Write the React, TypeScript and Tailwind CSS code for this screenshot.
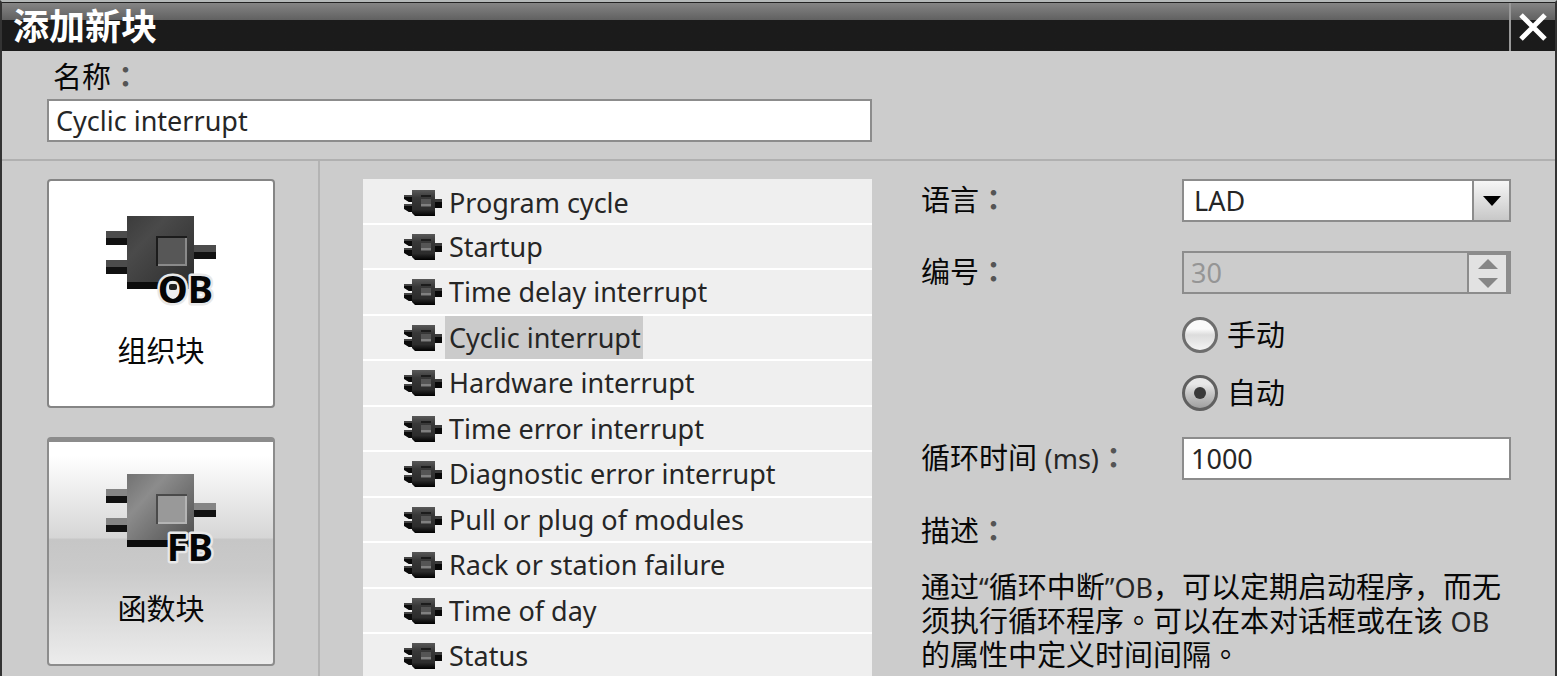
import { useState, type ReactNode } from "react";

const blocks = [
  "Program cycle",
  "Startup",
  "Time delay interrupt",
  "Cyclic interrupt",
  "Hardware interrupt",
  "Time error interrupt",
  "Diagnostic error interrupt",
  "Pull or plug of modules",
  "Rack or station failure",
  "Time of day",
  "Status",
];

/* Full-width punctuation that sits in the middle of its cell */
function Mid({ children }: { children: ReactNode }) {
  return (
    <span lang="zh-TW" className="font-['Noto_Sans_CJK_TC',sans-serif] leading-none">
      {children}
    </span>
  );
}

function Colon() {
  return (
    <span lang="zh-TW" className="font-['Noto_Sans_CJK_TC',sans-serif] leading-none font-bold text-[#555]">
      ：
    </span>
  );
}

function Latin({ children }: { children: ReactNode }) {
  return <span className="text-[27px] leading-none text-[#262626]">{children}</span>;
}

function BlockIcon({ label, dark }: { label: string; dark?: boolean }) {
  const id = "chip" + label;
  const top = dark ? "#4a4a4a" : "#8c8c8c";
  const low = dark ? "#2c2c2c" : "#4c4c4c";
  const pinTop = dark ? "#4c4c4c" : "#858585";
  return (
    <svg className="h-[100px] w-[112px]" viewBox="0 0 112 100" aria-hidden="true">
      <defs>
        <linearGradient id={id} x1="0" y1="0" x2="1" y2="1">
          <stop offset="0" stopColor={dark ? "#3c3c3c" : "#727272"} />
          <stop offset="0.3" stopColor={top} />
          <stop offset="1" stopColor={low} />
        </linearGradient>
      </defs>
      {[
        [1, 17, 22],
        [1, 46, 22],
        [88, 31, 23],
      ].map(([x, y, w]) => (
        <g key={`${x}-${y}`}>
          <rect x={x} y={y} width={w} height="14" fill={pinTop} />
          <rect x={x} y={y + 7} width={w} height="7" fill="#111" />
        </g>
      ))}
      <rect x="22" y="2" width="67" height="73" fill={`url(#${id})`} />
      <rect x="22" y="68" width="67" height="7" fill="#0c0c0c" />
      <rect x="51" y="22" width="31" height="30" fill={dark ? "#1c1c1c" : "#4a4a4a"} />
      <rect x="53" y="24" width="29" height="28" fill={dark ? "#8a8a8a" : "#b4b4b4"} />
      <rect x="53" y="24" width="27" height="26" fill={dark ? "#575757" : "#999"} />
      <text
        x="108"
        y="89"
        textAnchor="end"
        fontFamily="Noto Sans, sans-serif"
        fontWeight="700"
        fontSize="38"
        fill="#050505"
        stroke="#e8e8e8"
        strokeWidth="5"
        strokeLinejoin="round"
        paintOrder="stroke"
      >
        {label}
      </text>
      {dark && <ellipse cx="68" cy="76" rx="6" ry="9" fill="#eee" />}
      {dark && <rect x="64" y="70" width="8" height="6" rx="2" fill="#222" />}
    </svg>
  );
}

function ChipIcon() {
  return (
    <svg className="h-[28px] w-[40px] shrink-0" viewBox="0 0 40 28" aria-hidden="true">
      <defs>
        <linearGradient id="smallchip" x1="0" y1="0" x2="0" y2="1">
          <stop offset="0" stopColor="#595959" />
          <stop offset="0.3" stopColor="#383838" />
          <stop offset="0.75" stopColor="#2c2c2c" />
          <stop offset="1" stopColor="#000" />
        </linearGradient>
      </defs>
      <path d="M1 6h8v7H6L1 9z" fill="#444" />
      <path d="M1 8h8v5H6L1 10z" fill="#0a0a0a" />
      <path d="M1 15h8v8H6L1 19z" fill="#444" />
      <path d="M1 17h8v6H6L1 20z" fill="#0a0a0a" />
      <rect x="31" y="10" width="8" height="9" fill="#3a3a3a" />
      <rect x="31" y="13" width="8" height="6" fill="#080808" />
      <path d="M9 1h23v26H12l-3-3z" fill="url(#smallchip)" />
      <path d="M18 6h10v2H18z" fill="#1c1c1c" />
      <rect x="18" y="10" width="10" height="8" fill="#555" />
      <rect x="18" y="15" width="10" height="2" fill="#808080" />
    </svg>
  );
}

const field =
  "h-[43px] w-full rounded-none border-2 border-[#8c8c8c] bg-white text-[27px] text-[#262626] outline-none";

function Radio({ id, text, checked, onChange }: { id: string; text: string; checked: boolean; onChange: () => void }) {
  return (
    <div className="flex h-9 items-center gap-[9px]">
      <span className="relative h-9 w-9">
        <input
          id={id}
          type="radio"
          name="numbering"
          checked={checked}
          onChange={onChange}
          className="block h-9 w-9 appearance-none rounded-full border-[3px] border-[#6e6e6e] bg-linear-to-b from-[#fafafa] from-30% via-[#dcdcdc] via-50% to-[#f4f4f4] checked:border-[#606060] checked:from-[#e8e8e8] checked:from-20% checked:via-[#c8c8c8] checked:to-[#a0a0a0]"
        />
        {checked && (
          <span className="pointer-events-none absolute inset-3 rounded-full bg-[#3a3a3a]" />
        )}
      </span>
      <label htmlFor={id}>{text}</label>
    </div>
  );
}

export default function App() {
  const [name, setName] = useState("Cyclic interrupt");
  const [selected, setSelected] = useState("Cyclic interrupt");
  const [auto, setAuto] = useState(true);
  const [cycle, setCycle] = useState("1000");

  return (
    <div
      lang="zh-CN"
      className="flex min-h-screen flex-col border-x-2 border-t-2 border-x-[#333] border-t-[#b4b8b8] bg-[#ccc] font-['Noto_Sans','Noto_Sans_CJK_SC',sans-serif] text-[29px] leading-[34px] text-[#080808]"
    >
      <header className="flex h-[49px] items-stretch border-t border-[#222] bg-linear-to-b from-[#858585] from-0% via-[#606060] via-36% to-[#1b1b1b] to-36%">
        <h1 className="flex flex-1 items-center pl-[11px] text-[36px] leading-[46px] font-bold text-white">添加新块</h1>
        <button type="button" aria-label="关闭" className="flex w-[46px] items-center justify-center border-l-2 border-[#999]">
          <svg className="h-8 w-8" viewBox="0 0 32 32" fill="none" stroke="#fff" strokeWidth="5" aria-hidden="true">
            <path d="M4 4l24 24M28 4L4 28" />
          </svg>
        </button>
      </header>

      <section className="flex h-[110px] shrink-0 flex-col border-b-2 border-[#b0b0b0] pt-[9px] pr-[683px] pl-[45px]">
        <label htmlFor="name" className="mb-[5px] h-[34px] pl-[6px]">
          名称<Colon />
        </label>
        <input id="name" value={name} onChange={(e) => setName(e.target.value)} className={`${field} px-[7px]`} />
      </section>

      <main className="flex flex-1">
        <nav className="flex w-[318px] shrink-0 flex-col gap-[29px] border-r-2 border-[#b4b4b4] pt-[18px] pl-[45px]">
          <button
            type="button"
            className="flex h-[229px] w-[228px] flex-col items-center rounded-sm border-2 border-[#858585] bg-white pt-[33px]"
          >
            <BlockIcon label="OB" dark />
            <span className="mt-[20px]">组织块</span>
          </button>
          <button
            type="button"
            className="flex h-[229px] w-[228px] flex-col items-center rounded-sm border-2 border-t-[5px] border-[#8c8c8c] bg-[linear-gradient(#fff_6%,#d6d6d6_43%,#c6c6c6_44%,#cacaca_58%,#ececec)] pt-[30px]"
          >
            <BlockIcon label="FB" />
            <span className="mt-[20px]">函数块</span>
          </button>
        </nav>

        <ul className="mt-[18px] ml-[43px] flex-1 bg-[#efefef] text-[27px] text-[#262626]">
          {blocks.map((block) => (
            <li
              key={block}
              className="overflow-hidden border-b-2 border-white first:h-[47px] first:pt-[2px] last:h-[41px] last:border-b-0 even:h-[45px] odd:h-[46px]"
            >
              <button
                type="button"
                onClick={() => setSelected(block)}
                className="flex h-[44px] w-full items-center gap-[2px] pl-[40px] whitespace-nowrap"
              >
                <ChipIcon />
                <span
                  className={
                    selected === block
                      ? "flex h-[44px] items-center bg-[#cbcbcb] pr-[2px] pl-[4px]"
                      : "flex h-[44px] items-center pr-[2px] pl-[4px]"
                  }
                >
                  {block}
                </span>
              </button>
            </li>
          ))}
        </ul>

        <form className="mr-[44px] ml-[49px] w-[590px] shrink-0 pt-[18px]">
          <div className="grid grid-cols-[261px_1fr] items-center">
            <label htmlFor="language" className="h-[36px]">
              语言
              <Colon />
            </label>
            <div className="relative">
              <select id="language" className={`${field} appearance-none px-[10px]`}>
                <option>LAD</option>
              </select>
              <span className="pointer-events-none absolute inset-y-[2px] right-[2px] flex w-[37px] items-center justify-center border-2 border-y-0 border-r-0 border-[#8c8c8c] bg-linear-to-b from-[#f6f6f6] to-[#c8c8c8]">
                <svg className="h-[10px] w-[18px]" viewBox="0 0 18 10" aria-hidden="true">
                  <path d="M0 0h18L9 10z" fill="#000" />
                </svg>
              </span>
            </div>

            <label htmlFor="number" className="mt-[29px] h-[36px]">
              编号
              <Colon />
            </label>
            <div className="mt-[29px] flex h-[43px] border-2 border-[#8c8c8c]">
              <input
                id="number"
                value="30"
                readOnly
                disabled
                className="w-full min-w-0 flex-1 bg-transparent px-[7px] text-[27px] text-[#959595] outline-none"
              />
              <span className="flex w-[42px] flex-col border-t-2 border-r-[3px] border-l-2 border-[#8c8c8c] bg-[#e2e2e2]">
                <button type="button" disabled aria-label="增加" className="flex flex-1 items-center justify-center">
                  <svg className="h-[10px] w-[20px]" viewBox="0 0 20 10" aria-hidden="true">
                    <path d="M0 10h20L10 0z" fill="#868686" />
                  </svg>
                </button>
                <button type="button" disabled aria-label="减少" className="flex flex-1 items-center justify-center">
                  <svg className="h-[10px] w-[20px]" viewBox="0 0 20 10" aria-hidden="true">
                    <path d="M0 0h20L10 10z" fill="#868686" />
                  </svg>
                </button>
              </span>
            </div>

            <div className="col-start-2 mt-[23px] flex flex-col gap-[22px]">
              <Radio id="manual" text="手动" checked={!auto} onChange={() => setAuto(false)} />
              <Radio id="auto" text="自动" checked={auto} onChange={() => setAuto(true)} />
            </div>

            <label htmlFor="cycle" className="mt-[26px] h-[36px]">
              循环时间 <Latin>(ms)</Latin>
              <Colon />
            </label>
            <input
              id="cycle"
              value={cycle}
              onChange={(e) => setCycle(e.target.value)}
              className={`${field} mt-[26px] px-[7px]`}
            />
          </div>

          <h2 className="mt-[34px] h-[34px]">
            描述
            <Colon />
          </h2>
          <p className="mt-[22px]">
            通过<Latin>“</Latin>循环中断<Latin>”OB</Latin>，可以定期启动程序，而无须执行循环程序<Mid>。</Mid>可以在本对话框或在该{" "}
            <Latin>OB</Latin> 的属性中定义时间间隔<Mid>。</Mid>
          </p>
        </form>
      </main>
    </div>
  );
}
